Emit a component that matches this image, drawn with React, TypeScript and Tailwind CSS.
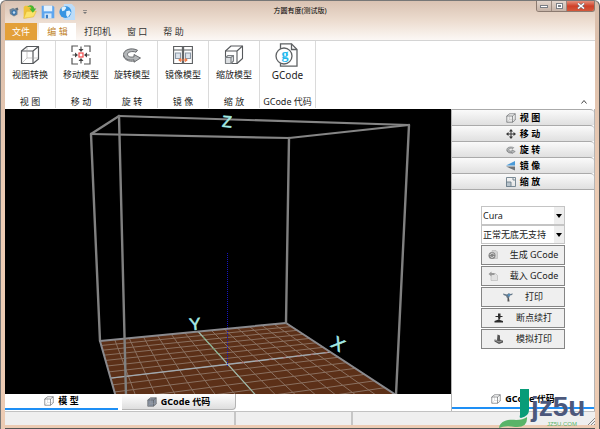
import { useState } from 'react';
import type { ReactNode } from 'react';

type Point = [number, number];

// Corners of the build volume, in viewport units
const floor: Point[] = [[95, 232], [281, 214], [391, 286], [122, 327]];
const top: Point[] = [[86, 25], [284, 29], [404, 16], [114, 7]];
const CELLS = 14;

// Maps the unit square onto the floor, with perspective
function project(u: number, v: number): Point {
  const [[x0, y0], [x1, y1], [x2, y2], [x3, y3]] = floor;
  const dx1 = x1 - x2;
  const dx2 = x3 - x2;
  const dx3 = x0 - x1 + x2 - x3;
  const dy1 = y1 - y2;
  const dy2 = y3 - y2;
  const dy3 = y0 - y1 + y2 - y3;
  const det = dx1 * dy2 - dx2 * dy1;
  const g = (dx3 * dy2 - dx2 * dy3) / det;
  const h = (dx1 * dy3 - dx3 * dy1) / det;
  const w = g * u + h * v + 1;
  return [
    ((x1 - x0 + g * x1) * u + (x3 - x0 + h * x3) * v + x0) / w,
    ((y1 - y0 + g * y1) * u + (y3 - y0 + h * y3) * v + y0) / w,
  ];
}

function Line({ from, to, color, width = 1, dash }: { from: Point; to: Point; color: string; width?: number; dash?: string }) {
  return (
    <line x1={from[0]} y1={from[1]} x2={to[0]} y2={to[1]} stroke={color} strokeWidth={width} strokeDasharray={dash} strokeLinecap="round" />
  );
}

function Viewport() {
  const steps = Array.from({ length: CELLS - 1 }, (_, i) => (i + 1) / CELLS);
  return (
    <svg viewBox="0 0 446 285" preserveAspectRatio="xMidYMid slice" className="absolute inset-0 h-full w-full">
      <polygon points={floor.map((p) => p.join(',')).join(' ')} fill="#5c3018" />
      {steps.map((s) => (
        <g key={s}>
          <Line from={project(s, 0)} to={project(s, 1)} color="#8a7060" />
          <Line from={project(0, s)} to={project(1, s)} color="#8a7060" />
        </g>
      ))}
      {/* Axes */}
      <Line from={project(0, 0.5)} to={project(1, 0.5)} color="#a2aab0" width={1.3} />
      <Line from={project(0.5, 0.5)} to={project(1, 0.5)} color="#b07878" dash="2 12" />
      <Line from={project(0.5, 0)} to={project(0.5, 1)} color="#9fb8a8" width={1.2} />
      <Line from={project(0.5, 0.1)} to={project(0.5, 0.4)} color="#6fae78" dash="2 3" />
      <line x1="222.500" y1="144" x2="222.500" y2="257" stroke="#1414c0" strokeDasharray="1 1" />
      {/* Frame */}
      {floor.map((p, i) => (
        <g key={i}>
          <Line from={p} to={floor[(i + 1) % 4]} color="#8a8a8e" width={2} />
          <Line from={top[i]} to={top[(i + 1) % 4]} color="#858585" width={2.2} />
          <Line from={p} to={top[i]} color="#808080" width={2.4} />
        </g>
      ))}
      <g fill="#a5ebe6" className="font-['Liberation_Sans',sans-serif]" stroke="#a5ebe6" strokeWidth=".6" fontSize="16" textAnchor="middle">
        <text x="222" y="18" transform="rotate(4 222 13)">Z</text>
        <text x="190" y="221" fontSize="17" transform="rotate(-6 190 215)">Y</text>
        <text x="333" y="241" fontSize="18" transform="rotate(32 333 235)">X</text>
      </g>
    </svg>
  );
}

function Cube({ className, fill = 'none' }: { className?: string; fill?: string }) {
  return (
    <svg viewBox="0 0 20 20" className={className} fill={fill} stroke="#56595c" strokeWidth="1.200" strokeLinejoin="round">
      <path d="M1.500 6 7 1.500h11.500V14L13 18.500H1.500z" />
      <path d="M1.500 6H13v12.500M13 6l5.500-4.500" />
      <path d="M7 2v11h11M7 13l-5 5" strokeWidth=".6" stroke="#a5a5a5" fill="none" />
    </svg>
  );
}

function CenterIcon() {
  return (
    <svg viewBox="0 0 20 20" className="h-5 w-5" fill="none" stroke="#555" strokeWidth="1.200">
      <path d="M1 7V1h6M13 1h6v6M19 13v6h-6M7 19H1v-6" />
      <path d="M10 1.500V6M10 18.500V14M1.500 10H6M18.500 10H14" />
      <path d="M7.500 4h5L10 7zM7.500 16h5L10 13zM4 7.500v5L7 10zM16 7.500v5L13 10z" fill="#444" stroke="none" />
      <rect x="8" y="8" width="4" height="4" stroke="#f04848" fill="#fff" />
    </svg>
  );
}

function RotateIcon({ className }: { className?: string }) {
  return (
    <svg viewBox="0 0 20 20" className={className} fill="#b4b7b9" stroke="#5d6063" strokeWidth=".9" strokeLinejoin="round">
      <path d="M15.500 5.200C9 2 1.500 5 1.500 9.500c0 4.500 6 6.500 10.500 5.300v2.400l6.500-4.200-6.500-3.500v2.300C8.500 12.600 5.500 11.600 5.500 9.400 5.500 7 10 5.700 14 7.200z" />
      <path d="M1.500 10.500c.5 4.500 6 6.500 10.500 5.500" fill="none" />
    </svg>
  );
}

function MirrorIcon() {
  return (
    <svg viewBox="0 0 20 20" className="h-5 w-5" fill="none" stroke="#5b5e60" strokeWidth="1.100">
      <path d="M.6 1.500h8.800v17H.6zM10.600 1.500h8.800v17h-8.800z" />
      <path d="M.6 5h8.800M10.600 5h8.800" />
      <path d="M2.500 8h5v5.500h-5zM12.500 8h5v5.500h-5z" fill="#dde4ec" stroke="#8b98a6" />
      <path d="M6 15h8M8 13.300 6 15l2 1.700M12 13.300l2 1.700-2 1.700" stroke="#ef7640" />
    </svg>
  );
}

function ScaleIcon() {
  return (
    <svg viewBox="0 0 20 20" className="h-5 w-5" fill="#fff" stroke="#56595c" strokeWidth="1.100" strokeLinejoin="round">
      <path d="M1.500 6 7 1h11.500v12.500L13 18.500H1.500z" />
      <path d="M1.500 6H13v12.500M13 6l5.500-5" fill="none" />
      <path d="M1.500 12.500 4 10.500h5.500v5.500l-2.500 2.500H1.500z" fill="#dde0e3" stroke="#7c8084" />
      <path d="M1.500 12.500H7v6M7 12.500l2.500-2" fill="none" stroke="#7c8084" />
    </svg>
  );
}

function GCodeIcon() {
  return (
    <span className="relative block h-6 w-6">
      <svg viewBox="0 0 24 24" className="h-6 w-6" fill="#fff" stroke="#5e6163" strokeWidth="1.300">
        <path d="M5.500.8h11L22 6.500v16.700H5.500z" />
        <path d="M16.500.8v5.700H22" fill="none" />
        <circle cx="9" cy="13" r="8" />
      </svg>
      <span className="absolute top-1 left-1.5 font-['Liberation_Serif',serif] text-[14px] leading-4 font-bold text-[#23b8ee]">g</span>
    </span>
  );
}

const panelIcons: Record<string, ReactNode> = {
  view: <Cube className="h-2.5 w-2.5" />,
  move: (
    <svg viewBox="0 0 20 20" className="h-2.5 w-2.5" fill="#333">
      <path d="M9 5H6l4-5 4 5h-3v4h4V6l5 4-5 4v-3h-4v4h3l-4 5-4-5h3v-4H5v3l-5-4 5-4v3h4z" />
    </svg>
  ),
  rotate: <RotateIcon className="h-2.5 w-2.5" />,
  mirror: (
    <svg viewBox="0 0 20 20" className="h-2.5 w-2.5">
      <path d="M0 9 18 0v9z" fill="#4a9ad8" />
      <path d="M0 11h18v8z" fill="#6e7276" />
    </svg>
  ),
  scale: (
    <svg viewBox="0 0 20 20" className="h-2.5 w-2.5" fill="none" stroke="#6d7f8b" strokeWidth="1.800">
      <path d="M1 1h18v18H1z" />
      <path d="M1 10h9v9H1z" fill="#b8c4cc" />
      <path d="M12 4h4v4" />
    </svg>
  ),
};

const panels = [
  { id: 'view', label: '视 图' },
  { id: 'move', label: '移 动' },
  { id: 'rotate', label: '旋 转' },
  { id: 'mirror', label: '镜 像' },
  { id: 'scale', label: '缩 放' },
];

const ribbonGroups = [
  { label: '视图转换', group: '视 图', icon: <Cube className="h-5 w-5" /> },
  { label: '移动模型', group: '移 动', icon: <CenterIcon /> },
  { label: '旋转模型', group: '旋 转', icon: <RotateIcon className="h-5 w-5" /> },
  { label: '镜像模型', group: '镜 像', icon: <MirrorIcon /> },
  { label: '缩放模型', group: '缩 放', icon: <ScaleIcon /> },
];

const actions = [
  {
    label: '生成 GCode',
    icon: (
      <svg viewBox="0 0 20 20" className="h-2.5 w-2.5">
        <path d="M8 1h8l3 3v13H8z" fill="#d5d5d5" stroke="#aaa" />
        <circle cx="8" cy="11" r="7" fill="#858585" />
        <path d="M4 10c2-5 7-4 8-1M5 13c2 3 6 2 7-1" fill="none" stroke="#e6e6e6" strokeWidth="2" />
      </svg>
    ),
  },
  {
    label: '载入 GCode',
    icon: (
      <svg viewBox="0 0 20 20" className="h-2.5 w-2.5">
        <path d="M6 5h9l4 4v10H6z" fill="#e2e2e2" stroke="#aaa" />
        <path d="M1 6 7 1v3h6v4H7v3z" fill="#999" />
      </svg>
    ),
  },
  {
    label: '打印',
    icon: (
      <svg viewBox="0 0 20 20" className="h-2.5 w-2.5">
        <path d="m0 3 8 2 4-3 2 2 6-1-2 3-4 1-2 5H8L6 8 1 6z" fill="#667888" />
        <path d="M9 5h6l-3 4z" fill="#4b9bd8" />
        <path d="M9 12h3l1 7H9z" fill="#555" />
      </svg>
    ),
  },
  {
    label: '断点续打',
    icon: (
      <svg viewBox="0 0 20 20" className="h-2.5 w-2.5" fill="#2c2c2c">
        <path d="M8 1h5v5h4v2h-4l-1 5h-3L8 8H3V6h5zM1 16l8-3 9 3v3H1z" />
      </svg>
    ),
  },
  {
    label: '模拟打印',
    icon: (
      <svg viewBox="0 0 20 20" className="h-2.5 w-2.5">
        <path d="m7 1 5 2v8l6 2v4l-8 3-9-5v-4l5 1z" fill="#555" />
        <path d="m2 12 8 4 7-3" fill="none" stroke="#bbb" strokeWidth="1.500" />
      </svg>
    ),
  },
];

function Select({ label, options }: { label: string; options: string[] }) {
  return (
    <div className="relative">
      <select aria-label={label} className="block h-[19px] w-full appearance-none border border-[#c4c4c4] bg-white pl-px text-[9px] text-[#222]">
        {options.map((o) => (
          <option key={o}>{o}</option>
        ))}
      </select>
      <span className="pointer-events-none absolute inset-y-px right-px flex w-2.5 items-center justify-center bg-[#eee]">
        <svg viewBox="0 0 6 4" className="h-1 w-1.5">
          <path d="M0 0h6L3 4z" fill="#000" />
        </svg>
      </span>
    </div>
  );
}

function TitleBar() {
  return (
    <header className="grid h-[22px] grid-cols-[1fr_auto_1fr] items-start">
      <div className="flex h-full items-center gap-1 pl-1">
        <button aria-label="方圆有度" className="w-2.5">
          <svg viewBox="0 0 20 20">
            <path d="m1 5 7-3 9 4v9l-7 4-8-5z" fill="#6e8498" />
            <circle cx="10" cy="11" r="5" fill="#3a76ad" />
            <circle cx="10" cy="11" r="2.500" fill="#c4dcf0" />
            <path d="m12 3 5-2 2 4-3 2z" fill="#5a6a78" />
          </svg>
        </button>
        <button aria-label="打开" className="w-3.5">
          <svg viewBox="0 0 20 20">
            <path d="M1 3 3 1h5l1 2h6v6L5 19H1z" fill="#eec33a" />
            <path d="m1 19 4-10h14l-4 8z" fill="#fbe26a" stroke="#dfae28" strokeWidth=".7" />
            <path d="M6 3c4-4 9-3 10 2h3l-5 6-5-6h3c0-2-3-3-6-2" fill="#49b530" />
          </svg>
        </button>
        <button aria-label="保存" className="w-3.5">
          <svg viewBox="0 0 20 20">
            <path d="M1 1h16l2 2v16H1z" fill="#5ea6ee" />
            <path d="M4 1h12v8H4z" fill="#e5f2fd" />
            <path d="M5 12h10v7H5z" fill="#d3e7f8" />
            <path d="M7 14h3v5H7z" fill="#3a7cc4" />
          </svg>
        </button>
        <button aria-label="导出" className="w-4">
          <svg viewBox="0 0 20 20">
            <path d="M6 0h10l4 4v16H6z" fill="#bcdcf8" />
            <circle cx="8" cy="10" r="7.500" fill="#3795e2" />
            <path d="M3 5c3-3 6-2 6 0l-2 3-3 1zM9 9l4-1 2 3-4 6-2-3z" fill="#def1fd" />
          </svg>
        </button>
        <button aria-label="自定义快速访问工具栏" className="ml-1 w-1">
          <svg viewBox="0 0 6 6">
            <path d="M0 0h6v1H0zM0 3h6L3 6z" fill="#777" />
          </svg>
        </button>
      </div>
      <h1 className="pt-1 text-[7px] leading-3 text-black">方圆有度(测试版)</h1>
      <div className="flex h-[11px] w-[59px] justify-self-end overflow-hidden rounded-b-[3px] border border-t-0 border-[#8b7a70]">
        <button aria-label="最小化" className="flex flex-1 items-center justify-center border-r border-[#9b8a80] bg-linear-to-b from-[#e3d6cd] to-[#c5b3a7]">
          <span className="h-[3px] w-2 border border-[#7b7f86] bg-white" />
        </button>
        <button aria-label="最大化" className="flex flex-1 items-center justify-center border-r border-[#9b8a80] bg-linear-to-b from-[#e3d6cd] to-[#c5b3a7]">
          <span className="flex h-1.5 w-[7px] items-center justify-center border border-[#7b7f86] bg-white">
            <span className="h-0.5 w-[3px] bg-[#7b7f86]" />
          </span>
        </button>
        <button aria-label="关闭" className="flex w-[27px] items-center justify-center bg-linear-to-b from-[#e4907c] via-[#cf4028] to-[#d4583a]">
          <svg viewBox="0 0 8 6" className="h-1.5 w-2">
            <path d="m1 .5 6 5M7 .5l-6 5" stroke="#666e7a" strokeWidth="2.600" />
            <path d="m1 .5 6 5M7 .5l-6 5" stroke="#fff" strokeWidth="1.500" />
          </svg>
        </button>
      </div>
    </header>
  );
}

function Watermark() {
  return (
    <div className="pointer-events-none absolute right-1 bottom-0 h-10 w-24">
      <svg viewBox="0 0 96 40" className="absolute inset-0 h-full w-full">
        <path d="M21 0h9v21q0 6-8 8-2 0-1-3z" fill="#089c78" />
        <path d="M0 39C1 32 9 30 17 31q7 0 11-3 1 11-12 10Q6 36 0 39" fill="#58b468" />
      </svg>
      <span className="absolute top-0.5 left-8 font-['Liberation_Sans',sans-serif] text-[28px] leading-8 font-bold text-[#4c587c]">jz5u</span>
      <span className="absolute bottom-px left-12 font-['Liberation_Sans',sans-serif] text-[6px] leading-2 text-[#58b468]">JZ5U.COM</span>
    </div>
  );
}

export default function App() {
  const [menu, setMenu] = useState('编 辑');

  return (
    <div className="relative flex min-h-screen flex-col rounded-t-md border-x border-t border-[#777] border-r-[#555] bg-linear-to-b from-[#d9beab] via-[#eecdb5] to-[#eccbb3] px-1 font-['Noto_Sans','Noto_Sans_CJK_SC',sans-serif] text-[9px] text-[#222]">
      <div className="bg-linear-to-b from-[#d9c2b2] via-[#ecdccf] to-[#fcf8f5]">
        <TitleBar />
        <nav className="flex h-[17px] text-[#333]">
          <button className="mr-0.5 w-8 bg-[#e3a03a] text-white">文件</button>
          {['编 辑', '打印机', '窗 口', '帮 助'].map((m) => (
            <button
              key={m}
              onClick={() => setMenu(m)}
              className={m === menu ? 'w-[37px] bg-white text-[#bf8226]' : 'px-2'}
            >
              {m}
            </button>
          ))}
        </nav>
      </div>

      {/* Ribbon */}
      <div className="flex h-[69px] border-t border-[#d4d4d4] bg-white pb-px">
        {ribbonGroups.map((g) => (
          <section key={g.group} className="flex w-[51px] flex-col items-center justify-between border-r border-[#dadada] pt-0.5">
            <button className="flex flex-col items-center leading-3">
              <span className="mb-0.5 flex h-6 items-center">{g.icon}</span>
              {g.label}
            </button>
            <span className="leading-3">{g.group}</span>
          </section>
        ))}
        <section className="flex w-14 flex-col items-center justify-between border-r border-[#dadada] pt-0.5">
          <button className="flex flex-col items-center text-[10px] leading-3">
            <span className="mb-0.5 flex h-6 items-center">
              <GCodeIcon />
            </span>
            GCode
          </button>
          <span className="leading-3 whitespace-nowrap">GCode 代码</span>
        </section>
        <button aria-label="折叠功能区" className="mr-1 mb-0 ml-auto self-end p-1">
          <svg viewBox="0 0 6 4" className="h-1 w-1.5">
            <path d="m.5 3.500 2.500-3 2.500 3" fill="none" stroke="#444" />
          </svg>
        </button>
      </div>

      <main className="flex flex-1 bg-white">
        <div className="flex flex-1 flex-col">
          <div className="relative flex-1 overflow-hidden bg-black">
            <Viewport />
          </div>
          <div className="flex h-[17px] gap-1 font-bold text-black">
            <button className="flex h-4 w-[113px] items-center justify-center gap-1 border-b-2 border-[#1e8ff5] bg-white">
              <Cube className="h-2.5 w-2.5" />
              模 型
            </button>
            <button className="flex h-4 w-[114px] items-center justify-center gap-1 rounded-br border-r border-b border-[#b4b4b4] bg-linear-to-b from-white to-[#dedede]">
              <Cube className="h-2.5 w-2.5" fill="#8992a0" />
              GCode 代码
            </button>
          </div>
        </div>

        <aside className="flex w-36 flex-col border-r border-l border-[#b5b5b5] bg-white">
          {panels.map((p) => (
            <button
              key={p.id}
              className="flex h-4 items-center justify-center gap-1 rounded-tr border-t border-[#aaa] bg-linear-to-b from-[#fafafa] to-[#e0e0e0] font-bold text-black last-of-type:border-b"
            >
              {panelIcons[p.id]}
              {p.label}
            </button>
          ))}
          <div className="border-t border-[#aaa]" />
          <div className="mt-4 ml-[29px] flex w-[84px] flex-col">
            <Select label="切片引擎" options={['Cura']} />
            <Select label="切片配置" options={['正常无底无支持']} />
            <div className="mt-px flex flex-col gap-px">
              {actions.map((a) => (
                <button key={a.label} className="flex h-5 items-center justify-center gap-3 border border-[#858585] bg-[#efefef]">
                  {a.icon}
                  {a.label}
                </button>
              ))}
            </div>
          </div>
          <button className="mt-auto mb-0.5 flex h-[18px] items-center justify-center gap-1 border-b-2 border-[#1e8ff5] font-bold text-black">
            <Cube className="h-2.5 w-2.5" />
            GCode 代码
          </button>
        </aside>
      </main>

      <footer className="flex h-3.5 border-t border-[#c2c2c2] bg-[#efefef]">
        <div className="w-[231px] border-r-2 border-[#c6c6c6]" />
        <div className="w-[117px] border-r-2 border-[#c6c6c6]" />
        <svg viewBox="0 0 8 8" className="mt-auto ml-auto h-2 w-2">
          <path d="m1 8 7-7M4 8l4-4M7 8l1-1" stroke="#888" />
        </svg>
      </footer>
      <div className="h-1 border-b border-[#555]" />
      <Watermark />
    </div>
  );
}
